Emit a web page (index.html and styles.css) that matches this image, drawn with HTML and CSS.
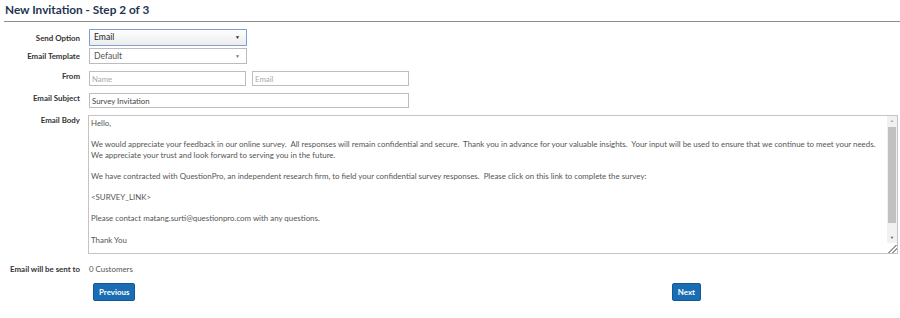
FILE: index.html
```html
<!DOCTYPE html>
<html lang="en">
<head>
    <meta charset="UTF-8">
    <title>New Invitation</title>
    <link rel="stylesheet" href="styles.css">
</head>
<body>
    <div class="wrap">
        <h1 class="title">New Invitation - Step 2 of 3</h1>
        <div class="form">
            <div class="row row_send">
                <label class="lbl">Send Option</label>
                <div class="sel sel_focus"><span>Email</span></div>
            </div>
            <div class="row row_tpl">
                <label class="lbl">Email Template</label>
                <div class="sel"><span>Default</span></div>
            </div>
            <div class="row row_from">
                <label class="lbl">From</label>
                <div class="ctrls">
                    <input class="inp inp_half" type="text" placeholder="Name">
                    <input class="inp inp_half" type="text" placeholder="Email">
                </div>
            </div>
            <div class="row row_subj">
                <label class="lbl">Email Subject</label>
                <input class="inp inp_full" type="text" value="Survey Invitation">
            </div>
            <div class="row row_body">
                <label class="lbl">Email Body</label>
                <div class="body_box">
                    <div class="body_text">
                        <p>Hello,</p>
                        <p>We would appreciate your feedback in our online survey.&nbsp; All responses will remain confidential and secure.&nbsp; Thank you in advance for your valuable insights.&nbsp; Your input will be used to ensure that we continue to meet your needs.<br>We appreciate your trust and look forward to serving you in the future.</p>
                        <p>We have contracted with QuestionPro, an independent research firm, to field your confidential survey responses.&nbsp; Please click on this link to complete the survey:</p>
                        <p>&lt;SURVEY_LINK&gt;</p>
                        <p>Please contact matang.surti@questionpro.com with any questions.</p>
                        <p>Thank You</p>
                    </div>
                    <div class="scroll">
                        <span class="arr arr_up">&#9650;</span>
                        <span class="track"><span class="thumb"></span></span>
                        <span class="arr">&#9660;</span>
                        <span class="grip"></span>
                    </div>
                </div>
            </div>
            <div class="row row_sent">
                <label class="lbl">Email will be sent to</label>
                <span class="count">0 Customers</span>
            </div>
        </div>
        <div class="btns">
            <button class="btn">Previous</button>
            <button class="btn">Next</button>
        </div>
    </div>
</body>
</html>
```

FILE: styles.css
```css
html, body, div, span, h1, p, label{
    margin: 0;
    padding: 0;
    border: 0;
}
body{
    background-color: #fff;
    font-family: "Lato", "Liberation Sans", sans-serif;
    color: #333;
}
.wrap{
    width: 900px;
}
.title{
    height: 22px;
    padding: 3px 0 0 1px;
    margin-left: 4px;
    box-sizing: border-box;
    font-size: 11.8px;
    font-weight: 700;
    line-height: 14px;
    color: #1e3550;
    border-bottom: 1px solid #8c8c8c;
}
.form{
    padding-top: 7px;
}
.row{
    display: flex;
    align-items: flex-start;
}
.lbl{
    width: 80px;
    margin-right: 9px;
    text-align: right;
    font-size: 7.9px;
    font-weight: 700;
    color: #333;
    line-height: 12px;
    flex-shrink: 0;
}
.row_send{
    height: 17px;
    margin-bottom: 2px;
    align-items: center;
}
.row_tpl{
    height: 16px;
    margin-bottom: 7px;
    align-items: center;
}
.row_from{
    margin-bottom: 7px;
}
.row_from .lbl{
    line-height: 8px;
    padding-top: 1px;
}
.row_subj{
    margin-bottom: 7px;
}
.row_subj .lbl{
    line-height: 8px;
    padding-top: 1px;
}
.row_body .lbl{
    line-height: 10px;
}
.sel{
    position: relative;
    width: 158px;
    height: 16px;
    box-sizing: border-box;
    border: 1px solid #bcbcbc;
    background-color: #fff;
    font-size: 8.6px;
    line-height: 14px;
    color: #555;
    padding-left: 4px;
}
.sel:after{
    position: absolute;
    top: 0;
    right: 6px;
    content: "\25BC";
    font-size: 5px;
    color: #777;
}
.sel_focus{
    border-color: #7f9fd6;
    background: linear-gradient(#fff, #ececec);
    color: #222;
    height: 17px;
    line-height: 15px;
}
.sel_focus:after{
    color: #222;
}
.ctrls{
    display: flex;
    gap: 6px;
}
.inp{
    height: 15px;
    box-sizing: border-box;
    border: 1px solid #bdbdbd;
    padding: 0 2px;
    font-family: inherit;
    font-size: 7.8px;
    color: #444;
    outline: 0;
    margin: 0;
}
.inp::placeholder{
    color: #aaa;
}
.inp_half{
    width: 157px;
}
.inp_full{
    width: 320px;
}
.body_box{
    display: flex;
    width: 810px;
    height: 139px;
    box-sizing: border-box;
    border: 1px solid #c4c4c4;
    margin-left: -1px;
    overflow: hidden;
}
.body_text{
    flex: 1;
    padding: 2px 2px;
    font-size: 7.9px;
    line-height: 10.6px;
    color: #555;
}
.body_text p{
    margin-bottom: 10.6px;
}
.scroll{
    display: flex;
    flex-direction: column;
    width: 10px;
    background-color: #f1f1f1;
}
.arr{
    height: 10px;
    font-size: 4px;
    line-height: 10px;
    text-align: center;
    color: #505050;
}
.arr_up{
    color: #a3a3a3;
}
.track{
    flex: 1;
    padding: 1px 1px 10px 1px;
    display: flex;
}
.thumb{
    flex: 1;
    background-color: #c1c1c1;
}
.grip{
    height: 10px;
    background-color: #fff;
    background-image: linear-gradient(135deg, transparent 55%, #999 55%, #999 62%, transparent 62%, transparent 75%, #999 75%, #999 82%, transparent 82%);
}
.row_sent{
    margin-top: 10px;
}
.row_sent .lbl{
    line-height: 10px;
}
.count{
    font-size: 7.9px;
    line-height: 10px;
    color: #555;
}
.btns{
    display: flex;
    justify-content: space-between;
    width: 608px;
    margin: 9px 0 0 93px;
}
.btn{
    height: 18px;
    padding: 0 5px;
    border: 1px solid #105a96;
    border-radius: 2px;
    background-color: #1a6db3;
    color: #fff;
    font-family: inherit;
    font-size: 7.9px;
    font-weight: 700;
    cursor: pointer;
}
```
